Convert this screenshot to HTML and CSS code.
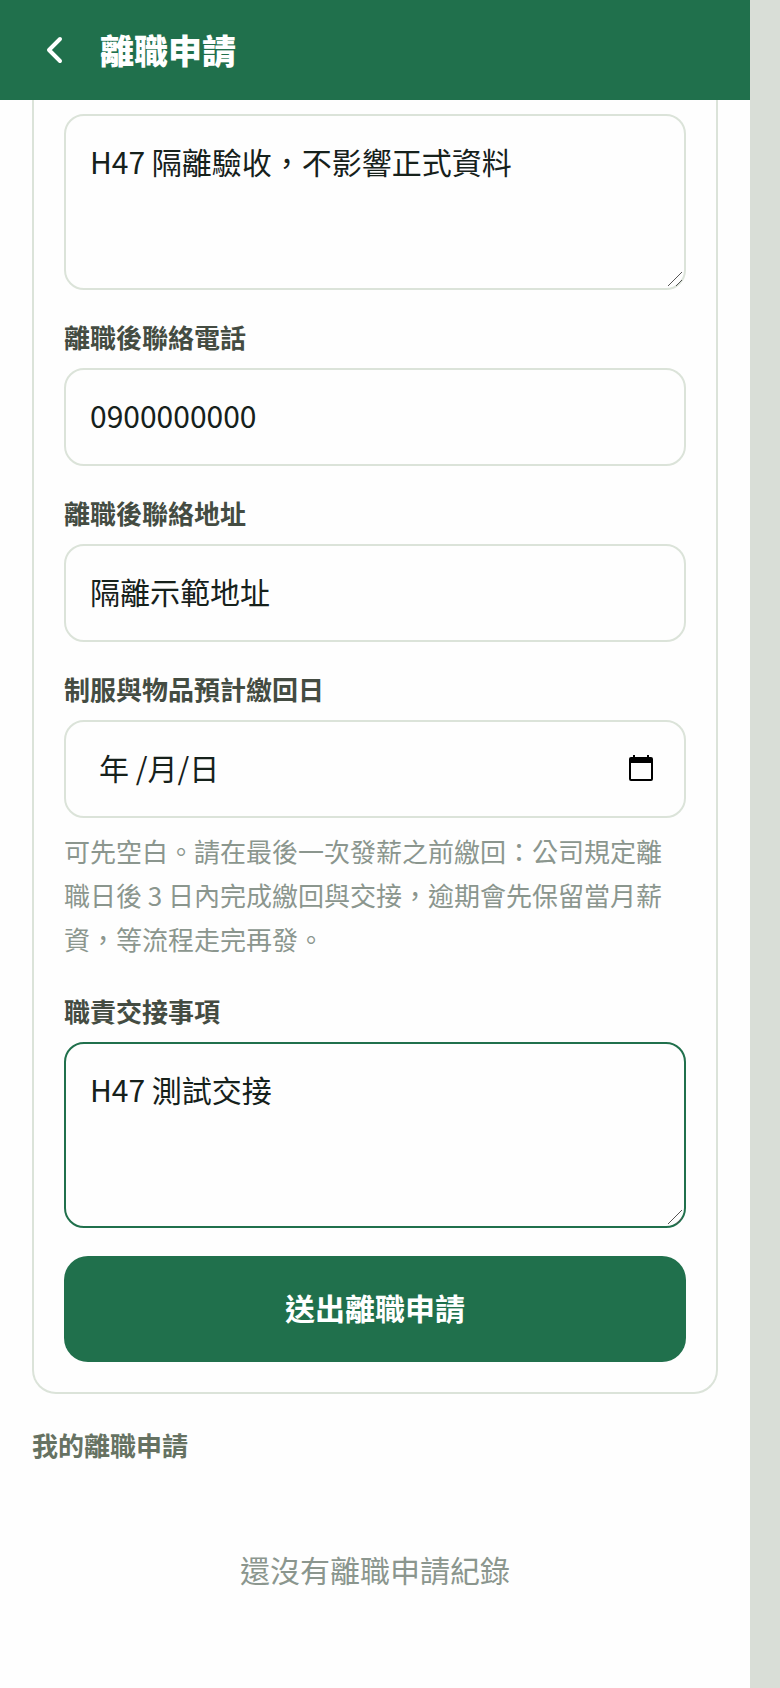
FILE: index.html
```html
<!DOCTYPE html>
<html lang="zh-Hant">
<head>
    <meta charset="UTF-8">
    <meta name="viewport" content="width=device-width, initial-scale=1.0">
    <title>離職申請</title>
    <link rel="stylesheet" href="styles.css">
</head>
<body>
    <div class="app">
        <header class="topbar">
            <button class="back-btn" type="button" aria-label="返回">
                <svg width="36" height="36" viewBox="0 0 36 36" fill="none" stroke="currentColor" stroke-width="4" stroke-linecap="round" stroke-linejoin="round">
                    <path d="M24 7L13 18l11 11"/>
                </svg>
            </button>
            <h1 class="title">離職申請</h1>
        </header>

        <main class="content">
            <form class="card">
                <div class="field">
                    <div class="control">
                        <textarea class="input area" id="reason" aria-label="離職原因">H47 隔離驗收，不影響正式資料</textarea>
                        <svg class="grip" width="20" height="20" viewBox="0 0 20 20"><path d="M2 16L16 2M10 16l6-6"/></svg>
                    </div>
                </div>

                <div class="field">
                    <label class="label" for="phone">離職後聯絡電話</label>
                    <input class="input" type="tel" id="phone" value="0900000000">
                </div>

                <div class="field">
                    <label class="label" for="address">離職後聯絡地址</label>
                    <input class="input" type="text" id="address" value="隔離示範地址">
                </div>

                <div class="field">
                    <label class="label" for="return-date">制服與物品預計繳回日</label>
                    <div class="control">
                        <input class="input date" type="text" id="return-date" value="年 /月/日">
                        <button class="calendar-btn" type="button" aria-label="選擇日期">
                            <svg width="24" height="26" viewBox="0 0 24 26">
                                <path fill-rule="evenodd" d="M4 0h2v2h12V0h2v2h2a2 2 0 0 1 2 2v20a2 2 0 0 1-2 2H2a2 2 0 0 1-2-2V4a2 2 0 0 1 2-2h2zM2 8v16h20V8z"/>
                            </svg>
                        </button>
                    </div>
                    <p class="hint">可先空白。請在最後一次發薪之前繳回：公司規定離職日後 3 日內完成繳回與交接，逾期會先保留當月薪資，等流程走完再發。</p>
                </div>

                <div class="field">
                    <label class="label" for="handover">職責交接事項</label>
                    <div class="control">
                        <textarea class="input area area-tall active" id="handover">H47 測試交接</textarea>
                        <svg class="grip" width="20" height="20" viewBox="0 0 20 20"><path d="M2 16L16 2M10 16l6-6"/></svg>
                    </div>
                </div>

                <button class="submit-btn" type="button">送出離職申請</button>
            </form>

            <h2 class="section-title">我的離職申請</h2>
            <p class="empty">還沒有離職申請紀錄</p>
        </main>
    </div>
</body>
</html>
```

FILE: styles.css
```css
* {
    box-sizing: border-box;
}

body {
    margin: 0;
    padding-right: 30px;
    background: #d9ded7;
    color: #16211b;
    font-family: "Noto Sans CJK TC", "Noto Sans", sans-serif;
}

button, input, textarea {
    font-family: inherit;
    color: inherit;
}

.app {
    min-height: 100vh;
    background: #fefefe;
}

.topbar {
    display: flex;
    align-items: center;
    gap: 28px;
    height: 100px;
    padding: 0 36px;
    background: #20704c;
    color: #fff;
}

.back-btn {
    display: flex;
    padding: 0;
    border: none;
    background: none;
    cursor: pointer;
}

.title {
    margin: 0;
    font-size: 34px;
    line-height: 48px;
    font-weight: 800;
}

.content {
    padding: 0 32px;
}

.card {
    padding: 14px 30px 30px;
    border: 2px solid #dbe3d9;
    border-top: none;
    border-radius: 0 0 24px 24px;
}

.field {
    margin-bottom: 28px;
}

.label {
    display: block;
    margin-bottom: 12px;
    color: #444c42;
    font-size: 26px;
    line-height: 38px;
    font-weight: 700;
}

.control {
    position: relative;
}

.input {
    display: block;
    width: 100%;
    height: 98px;
    padding: 22px 24px 26px;
    border: 2px solid #dbe3d9;
    border-radius: 20px;
    outline: none;
    background: #fefefe;
    font-size: 30px;
    line-height: 46px;
}

.area {
    height: 176px;
    resize: vertical;
}

.area::-webkit-resizer {
    display: none;
}

.area-tall {
    height: 186px;
}

.active {
    border-color: #20704c;
}

/* resize handle */
.grip {
    position: absolute;
    right: 0;
    bottom: 0;
    fill: none;
    stroke: #555;
    stroke-width: 1;
    pointer-events: none;
}

.date {
    padding-left: 33px;
}

.calendar-btn {
    position: absolute;
    top: 0;
    right: 33px;
    display: flex;
    align-items: center;
    height: 100%;
    padding: 0 0 2px;
    border: none;
    background: none;
    color: #000;
    cursor: pointer;
}

.hint {
    margin: 11px 0 31px;
    color: #8b968e;
    font-size: 26px;
    line-height: 44px;
}

.submit-btn {
    display: block;
    width: 100%;
    padding: 28px 30px 32px;
    border: none;
    border-radius: 24px;
    background: #20704c;
    color: #fff;
    font-size: 30px;
    line-height: 46px;
    font-weight: 700;
    cursor: pointer;
}

.section-title {
    margin: 32px 0 0;
    color: #667262;
    font-size: 26px;
    line-height: 38px;
    font-weight: 700;
}

.empty {
    margin: 0;
    padding: 82px 0;
    color: #8b968e;
    font-size: 30px;
    line-height: 46px;
    text-align: center;
}
```
